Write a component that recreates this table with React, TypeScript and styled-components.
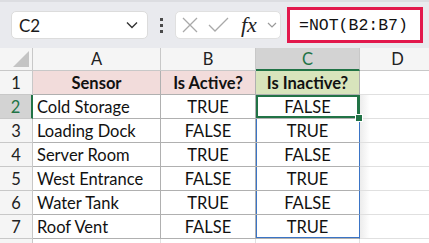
import React from 'react';
import styled, { createGlobalStyle } from 'styled-components';

const GlobalStyle = createGlobalStyle`
  html, body {
    margin: 0;
    padding: 0;
    background: #ffffff;
    overflow: hidden;
  }
`;

const Page = styled.div`
  width: 429px;
  height: 243px;
  overflow: hidden;
  font-family: Lato, 'Liberation Sans', sans-serif;
  color: #111;
`;

const Toolbar = styled.div`
  height: 48px;
  box-sizing: border-box;
  background: #e9eaee;
  border-top: 2px solid #dcdde1;
  display: flex;
  align-items: center;
  padding-left: 11px;
`;

const NameBox = styled.div`
  width: 137px;
  height: 28px;
  box-sizing: border-box;
  background: #fff;
  border: 1px solid #dcdcdc;
  border-radius: 5px;
  display: flex;
  align-items: center;
  justify-content: space-between;
  padding: 0 9px 0 7px;
  font-size: 17px;
  color: #1a1a1a;
`;

const Dots = styled.div`
  width: 27px;
  display: flex;
  flex-direction: column;
  align-items: center;
  gap: 3px;

  span {
    width: 3px;
    height: 3px;
    background: #4a4a4a;
  }
`;

const FxBox = styled.div`
  width: 106px;
  height: 28px;
  box-sizing: border-box;
  background: #fff;
  border: 1px solid #e0e0e0;
  border-radius: 5px;
  display: flex;
  align-items: center;
  padding-left: 6px;
  gap: 10px;
`;

const FxText = styled.span`
  font-family: 'Liberation Serif', serif;
  font-style: italic;
  font-size: 22px;
  color: #222;
  margin-left: 2px;
  line-height: 1;
`;

const FormulaBox = styled.div`
  margin-left: 6px;
  width: 136px;
  height: 36px;
  box-sizing: border-box;
  background: #fff;
  border: 3px solid #e2184c;
  display: flex;
  align-items: center;
  padding-left: 9px;
  font-family: 'Liberation Mono', monospace;
  font-size: 16.5px;
  color: #111;
`;

const Sheet = styled.div`
  display: grid;
  grid-template-columns: 33px 128px 95px 104px 76px;
  grid-template-rows: 23px repeat(7, 24px) 24px;
`;

const Corner = styled.div`
  position: relative;
  background: #f5f5f5;
  border-right: 1px solid #c8c8c8;
  border-bottom: 1px solid #c8c8c8;

  &::after {
    content: '';
    position: absolute;
    right: 3px;
    bottom: 3px;
    width: 0;
    height: 0;
    border-left: 16px solid transparent;
    border-bottom: 16px solid #c4c4c4;
  }
`;

const ColHead = styled.div<{ $active?: boolean }>`
  box-sizing: border-box;
  background: ${p => (p.$active ? '#d3d3d3' : '#f5f5f5')};
  color: ${p => (p.$active ? '#217346' : '#222')};
  border-right: 1px solid #c8c8c8;
  border-bottom: ${p => (p.$active ? '2px solid #217346' : '1px solid #c8c8c8')};
  display: flex;
  align-items: center;
  justify-content: center;
  font-size: 16.5px;
`;

const RowHead = styled.div<{ $active?: boolean }>`
  box-sizing: border-box;
  background: ${p => (p.$active ? '#d3d3d3' : '#f5f5f5')};
  color: ${p => (p.$active ? '#217346' : '#222')};
  border-right: ${p => (p.$active ? '2px solid #217346' : '1px solid #c8c8c8')};
  border-bottom: 1px solid #c8c8c8;
  display: flex;
  align-items: center;
  justify-content: center;
  font-size: 16.5px;
`;

const Cell = styled.div<{
  $bg?: string;
  $bold?: boolean;
  $align?: 'left' | 'center';
  $spill?: 'top' | 'mid' | 'bottom';
  $selected?: boolean;
}>`
  position: relative;
  box-sizing: border-box;
  background: ${p => p.$bg || '#fff'};
  border-right: 1px solid #b0b0b0;
  border-bottom: 1px solid #b0b0b0;
  display: flex;
  align-items: center;
  justify-content: ${p => (p.$align === 'left' ? 'flex-start' : 'center')};
  padding-left: ${p => (p.$align === 'left' ? '4px' : '0')};
  font-size: 16.5px;
  font-weight: ${p => (p.$bold ? 700 : 400)};
  color: #111;
  white-space: nowrap;
  ${p =>
    p.$spill &&
    `
    border-right-color: #3a74c6;
    box-shadow: inset 1px 0 0 #3a74c6${p.$spill === 'bottom' ? ', inset 0 -1px 0 #3a74c6' : ''};
  `}
  ${p =>
    p.$selected &&
    `
    box-shadow: inset 0 0 0 2px #217346;
    border-right-color: #217346;
  `}
`;

const Handle = styled.span`
  position: absolute;
  right: -4px;
  bottom: -4px;
  width: 6px;
  height: 6px;
  background: #217346;
  border: 1px solid #fff;
  z-index: 2;
`;

const EmptyCell = styled.div<{ $shade?: boolean }>`
  box-sizing: border-box;
  background: ${p => (p.$shade ? 'linear-gradient(90deg, #ececec 0, #fff 10px)' : '#fff')};
  border-right: 1px solid #e0e0e0;
  border-bottom: 1px solid #e0e0e0;
`;

const rows = [
  ['Cold Storage', 'TRUE', 'FALSE'],
  ['Loading Dock', 'FALSE', 'TRUE'],
  ['Server Room', 'TRUE', 'FALSE'],
  ['West Entrance', 'FALSE', 'TRUE'],
  ['Water Tank', 'TRUE', 'FALSE'],
  ['Roof Vent', 'FALSE', 'TRUE'],
];

const Icon = ({ children, w = 16 }: { children: React.ReactNode; w?: number }) => (
  <svg width={w} height={16} viewBox={`0 0 ${w} 16`} fill="none" stroke="#a9a9a9" strokeWidth={1.3}>
    {children}
  </svg>
);

const App: React.FC = () => {
  return (
    <Page>
      <GlobalStyle />
      <Toolbar>
        <NameBox>
          <span>C2</span>
          <svg width="12" height="8" viewBox="0 0 12 8" fill="none" stroke="#333" strokeWidth={1.4}>
            <path d="M1 1.5 L6 6.5 L11 1.5" />
          </svg>
        </NameBox>
        <Dots>
          <span />
          <span />
          <span />
        </Dots>
        <FxBox>
          <Icon>
            <path d="M1 1 L15 15 M15 1 L1 15" />
          </Icon>
          <Icon w={21}>
            <path d="M1 8 L7 14 L20 1" />
          </Icon>
          <FxText>fx</FxText>
          <svg width="10" height="6" viewBox="0 0 10 6" fill="none" stroke="#9a9a9a" strokeWidth={1.2}>
            <path d="M1 1 L5 5 L9 1" />
          </svg>
        </FxBox>
        <FormulaBox>=NOT(B2:B7)</FormulaBox>
      </Toolbar>
      <Sheet>
        <Corner />
        <ColHead>A</ColHead>
        <ColHead>B</ColHead>
        <ColHead $active>C</ColHead>
        <ColHead>D</ColHead>

        <RowHead>1</RowHead>
        <Cell $bg="#f2dcdb" $bold>Sensor</Cell>
        <Cell $bg="#f2dcdb" $bold>Is Active?</Cell>
        <Cell $bg="#d8e4bc" $bold>Is Inactive?</Cell>
        <EmptyCell />

        {rows.map((r, i) => (
          <React.Fragment key={r[0]}>
            <RowHead $active={i === 0}>{i + 2}</RowHead>
            <Cell $align="left">{r[0]}</Cell>
            <Cell>{r[1]}</Cell>
            <Cell
              $selected={i === 0}
              $spill={i === 0 ? 'top' : i === rows.length - 1 ? 'bottom' : 'mid'}
            >
              {r[2]}
              {i === 0 && <Handle />}
            </Cell>
            <EmptyCell $shade />
          </React.Fragment>
        ))}

        <RowHead />
        <EmptyCell />
        <EmptyCell />
        <EmptyCell />
        <EmptyCell />
      </Sheet>
    </Page>
  );
};

export default App;
